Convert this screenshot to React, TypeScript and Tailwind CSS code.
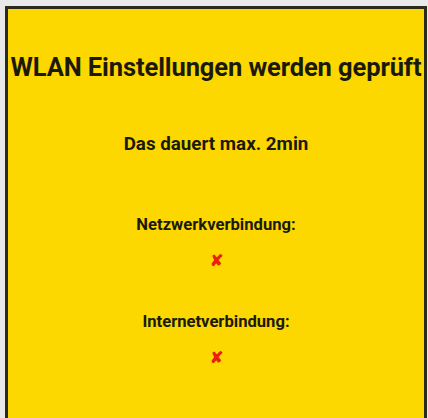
export default function App() {
  return (
    <div className="h-[418px] w-[428px] overflow-hidden bg-[#e9e9e9] pl-[5px] pt-[6px] pr-[1px] font-['Roboto',sans-serif] text-[#1a1a0a]">
      <div className="flex h-[440px] flex-col items-center border-[3px] border-b-0 border-[#2a2a1c] bg-[#fdd700]">
        <h1 className="mt-[46px] whitespace-nowrap text-[25.5px] font-bold leading-none tracking-[-0.1px]">
          WLAN Einstellungen werden geprüft
        </h1>
        <p className="mt-[54px] text-[18.8px] font-bold leading-none">Das dauert max. 2min</p>
        <p className="mt-[64px] text-[16.6px] font-bold leading-none">Netzwerkverbindung:</p>
        <span className="mt-[19px] text-[16px] font-bold leading-none text-[#e8210f]">✘</span>
        <p className="mt-[45px] text-[16.6px] font-bold leading-none">Internetverbindung:</p>
        <span className="mt-[20px] text-[16px] font-bold leading-none text-[#e8210f]">✘</span>
      </div>
    </div>
  );
}
